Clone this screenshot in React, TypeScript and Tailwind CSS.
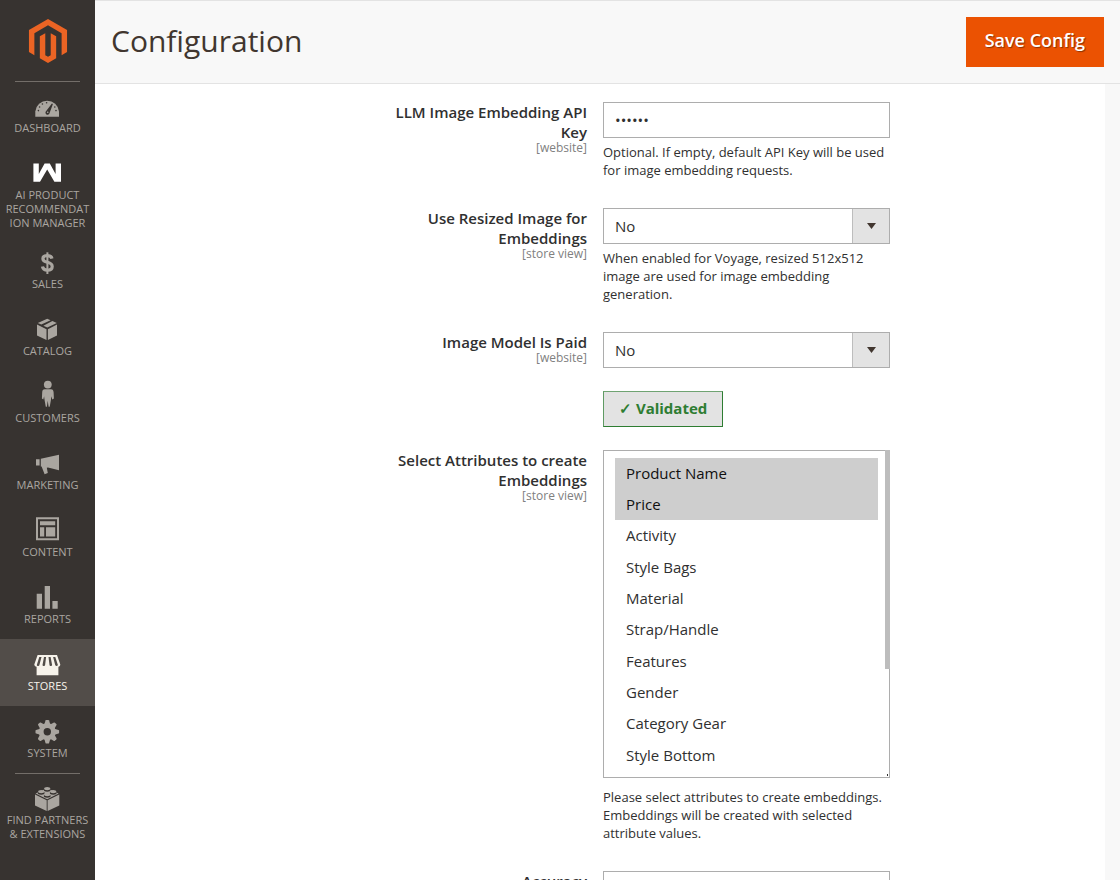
import React, {useState} from 'react';

interface MenuItem {
  label: string;
  icon: React.ReactNode;
  active?: boolean;
  divider?: boolean;
  light?: boolean;
}

const Glyph = ({children}: {children: React.ReactNode}) => (
  <svg viewBox="0 0 27 28" className="w-[27px] h-7 overflow-visible" fill="currentColor" aria-hidden="true">
    {children}
  </svg>
);

const DARK = '#373330';

const GaugeIcon = () => (
  <Glyph>
    <path d="M1.3 25.7V20.5a11.9 11.9 0 0 1 23.7 0V25.7z"/>
    <g fill={DARK}>
      <circle cx="4.4" cy="19.6" r="0.8"/>
      <circle cx="5.6" cy="16" r="0.8"/>
      <circle cx="8.4" cy="13" r="0.8"/>
      <circle cx="12.6" cy="11.8" r="0.8"/>
      <circle cx="20.8" cy="16" r="0.8"/>
      <circle cx="22" cy="19.6" r="0.8"/>
      <path d="M17.9 12.4l1 .6-3.3 9.1a2.1 2.1 0 1 1-3.4-2.1z"/>
    </g>
    <circle cx="13.7" cy="21.3" r="0.8"/>
  </Glyph>
);

const RecommendIcon = () => (
  <Glyph>
    <path d="M-.6 5.4H4.8V16L10.6 5.4h5.2L21.6 16V5.4h5.4v18.3h-6.6L13.2 11.6 6 23.7H-.6z"/>
  </Glyph>
);

const DollarIcon = () => (
  <Glyph>
    <path d="M12.4 5.3h2V27h-2z"/>
    <path d="M18 11.6c-.5-2-2.1-2.9-4.7-2.9-2.7 0-4.4 1.1-4.4 3 0 2 1.7 2.9 4.6 3.6 3.1.8 4.7 1.9 4.7 4.2 0 2.4-1.9 3.7-4.8 3.7-2.8 0-4.5-1.3-5-3.7"
          fill="none" stroke="currentColor" strokeWidth="3.2"/>
  </Glyph>
);

const BoxIcon = () => (
  <Glyph>
    <path d="M13.2 4.7l3.4 1.5-9.3 4.4-3.5-1.7zM18.4 7l4.4 1.9-9.5 4.7-3.9-1.9z"/>
    <path d="M3 10.5l9.5 4.7V26L3 21.4zM23 10.5l-9.1 4.7V26l9.1-4.6z"/>
  </Glyph>
);

const PersonIcon = () => (
  <Glyph>
    <circle cx="13.8" cy="3.6" r="3.9"/>
    <path d="M10.8 8.2h6.2c1.8 0 2.4 1.2 2.6 3l.3 6.4-1.6.9-1-3.3-.4 4.1-1.2 6.4h-1.1l-.9-5.9-.8 5.9h-1.1l-1.2-6.4-.5-4.1-.8 3.3-1.4-.9.3-6.4c.1-1.8.8-3 2.6-3z"/>
  </Glyph>
);

const MegaphoneIcon = () => (
  <Glyph>
    <path d="M2 11.3h3.6v6.2H2zM6.8 10.8L25 6.7v15.6L14 19.4l-1.2.4 1 5.3-3.2 1.2-3-7.8h-.8z"/>
  </Glyph>
);

const LayoutIcon = () => (
  <Glyph>
    <path d="M2 2.3h23v23H2zM4 4.3v19h19v-19z" fillRule="evenodd"/>
    <path d="M6 6.3h15.2v4H6zM6 12.2h4.2v9.2H6zM12 12.2h9.2v9.2H12z"/>
  </Glyph>
);

const BarsIcon = () => (
  <Glyph>
    <path d="M2.7 11.7H8v15H2.7zM10.7 4H16v22.7h-5.3zM18.4 19h5.3v7.7h-5.3z"/>
  </Glyph>
);

const ShopIcon = () => (
  <Glyph>
    <path d="M3.6 6h19.4l3.3 9.6c0 1.3-.8 2-1.9 2.2v8.5H2.6v-8.5c-1.3-.2-2.3-.9-2.3-2.2z"/>
    <g fill="#524d49">
      <path d="M5.3 8h2.2L5.4 16c-.3 1.3-2.4 1.3-2.6 0zM10 8h2.1l-1 8c-.3 1.3-2.4 1.3-2.6 0zM14.5 8h2.1l1.5 8c-.3 1.3-2.4 1.3-2.6 0zM19.1 8h2.2l2.6 8c-.3 1.3-2.3 1.3-2.7 0z"/>
    </g>
  </Glyph>
);

const teeth = [0, 45, 90, 135, 180, 225, 270, 315];

const GearIcon = () => (
  <Glyph>
    <path d="M13.3 7.2a8.5 8.5 0 1 0 0 17 8.5 8.5 0 1 0 0-17zm0 4.8a3.7 3.7 0 1 1 0 7.4 3.7 3.7 0 1 1 0-7.4z" fillRule="evenodd"/>
    {teeth.map(angle => (
      <path key={angle} d="M10.3 8.6l1.2-4.1q.2-.6.8-.6h2q.6 0 .8.6l1.2 4.1z" transform={`rotate(${angle} 13.3 15.7)`}/>
    ))}
  </Glyph>
);

const BrickIcon = () => (
  <Glyph>
    <path d="M13.2 5.2L24.6 10.6 13.2 16.2 1.6 10.6z"/>
    <path d="M1 11.6l11.7 5.6V28L1 22.4zM25.3 11.6l-11.7 5.6V28l11.7-5.6z"/>
    {[[13.2, 5.6], [7.2, 8.6], [19.2, 8.6], [13.2, 11.6]].map(([x, y]) => (
      <g key={`${x}-${y}`}>
        <ellipse cx={x} cy={y + 1.4} rx="3.4" ry="1.7" fill={DARK}/>
        <ellipse cx={x} cy={y} rx="3.1" ry="1.7"/>
      </g>
    ))}
  </Glyph>
);

const menu: MenuItem[] = [
  {label: 'Dashboard', icon: <GaugeIcon/>, divider: true},
  {label: 'AI Product Recommendation Manager', icon: <RecommendIcon/>, light: true},
  {label: 'Sales', icon: <DollarIcon/>},
  {label: 'Catalog', icon: <BoxIcon/>},
  {label: 'Customers', icon: <PersonIcon/>},
  {label: 'Marketing', icon: <MegaphoneIcon/>},
  {label: 'Content', icon: <LayoutIcon/>},
  {label: 'Reports', icon: <BarsIcon/>},
  {label: 'Stores', icon: <ShopIcon/>, active: true},
  {label: 'System', icon: <GearIcon/>},
  {label: 'Find Partners & Extensions', icon: <BrickIcon/>, divider: true},
];

const attributes = [
  'Product Name', 'Price', 'Activity', 'Style Bags', 'Material', 'Strap/Handle', 'Features', 'Gender',
  'Category Gear', 'Style Bottom',
];

const Sidebar = () => (
  <nav className="w-[95px] shrink-0 bg-[#373330] text-[#aaa6a0]">
    <a href="#home" aria-label="Magento" className="flex justify-center items-center h-[81px] text-[#eb6424]">
      <svg viewBox="0 0 24 24" className="w-11 h-11" fill="currentColor" aria-hidden="true">
        <path d="M12 24l-4.455-2.572v-12l2.97-1.715v12.001l1.485.902 1.485-.902V7.713l2.971 1.715v12L12 24zM22.391 6v12l-2.969 1.714V7.713L12 3.43 4.574 7.713v12.001L1.609 18V6L12 0l10.391 6z"/>
      </svg>
    </a>
    <ul>
      {menu.map(item => (
        <li key={item.label} className="relative">
          {item.divider && <span className="absolute top-0 left-[15px] right-[15px] h-px bg-[#736e69]"/>}
          <a
            href="#menu"
            className={`flex flex-col items-center min-h-[67px] pt-[10px] pb-[7px] px-[5px] ${item.active ? 'bg-[#524d49] text-[#f7f3eb]' : ''}`}
          >
            <span className={`flex justify-center h-7 mb-[2px] ${item.light ? 'text-white' : ''}`}>{item.icon}</span>
            <span className="w-full text-[11px] leading-[14px] text-center uppercase break-all">
              {item.label.startsWith('AI') ? <>AI Product<br/>Recommendation Manager</> :
                item.label.startsWith('Find') ? <>Find Partners<br/>&amp; Extensions</> : item.label}
            </span>
          </a>
        </li>
      ))}
    </ul>
  </nav>
);

interface FieldProps {
  id?: string;
  label?: string;
  scope?: string;
  note?: string;
  children: React.ReactNode;
}

const Field = ({id, label, scope, note, children}: FieldProps) => (
  <div className="grid grid-cols-[492fr_287fr_199fr] gap-x-4 mb-[23px]">
    <div className="justify-self-end max-w-[200px] text-right">
      {label && <label htmlFor={id} className="block text-[15px] leading-5 font-semibold">{label}</label>}
      {scope && <span className="block text-xs leading-3 text-[#808080]">[{scope}]</span>}
    </div>
    <div className="min-w-0">
      {children}
      {note && <p className="mt-[5px] mb-[6px] text-[13px] leading-[18px]">{note}</p>}
    </div>
  </div>
);

const YesNo = ({id}: {id: string}) => (
  <div className="relative">
    <select id={id} defaultValue="No" className="block w-full h-9 pl-[11px] pr-12 appearance-none bg-white border border-[#adadad] text-[15px]">
      <option>Yes</option>
      <option>No</option>
    </select>
    <span className="absolute top-px right-px bottom-px w-[37px] flex items-center justify-center bg-[#e3e3e3] border-l border-[#bdbdbd] pointer-events-none">
      <svg viewBox="0 0 9 6" className="w-[9px] h-[6px]" fill="#41362f" aria-hidden="true"><path d="M0 0h9L4.5 6z"/></svg>
    </span>
  </div>
);

const App = () => {
  const [apiKey, setApiKey] = useState('secret');
  const [selected, setSelected] = useState(['Product Name', 'Price']);

  const updateSelected = (e: React.ChangeEvent<HTMLSelectElement>) => {
    setSelected(Array.from(e.target.selectedOptions, option => option.value));
  };

  return (
    <div className="flex h-screen overflow-hidden bg-white text-[#303030] font-['Open_Sans','Noto_Sans',sans-serif]">
      <Sidebar/>
      <div className="flex flex-col flex-1 min-w-0">
        <header className="flex shrink-0 items-center justify-between h-[84px] px-4 bg-[#f8f8f8] border-t border-b border-[#e3e3e3]">
          <h1 className="pb-[2px] text-[30px] leading-10 text-[#41362f]">Configuration</h1>
          <button className="h-[50px] px-[19px] pb-1 bg-[#eb5202] text-white text-lg font-semibold [text-shadow:1px_1px_1px_rgba(0,0,0,0.4)]">
            Save Config
          </button>
        </header>
        <main className="flex-1 min-h-0 pr-[15px] bg-[#f8f8f8] overflow-hidden">
          <form className="min-h-full pt-[18px] bg-white" onSubmit={e => e.preventDefault()}>
            <Field id="api-key" label="LLM Image Embedding API Key" scope="website"
                   note="Optional. If empty, default API Key will be used for image embedding requests.">
              <input id="api-key" type="password" value={apiKey} onChange={e => setApiKey(e.target.value)}
                     className="block w-full h-9 px-[11px] border border-[#adadad] text-[15px]"/>
            </Field>
            <Field id="resized" label="Use Resized Image for Embeddings" scope="store view"
                   note="When enabled for Voyage, resized 512x512 image are used for image embedding generation.">
              <YesNo id="resized"/>
            </Field>
            <Field id="paid" label="Image Model Is Paid" scope="website">
              <YesNo id="paid"/>
            </Field>
            <Field>
              <button type="button" className="block h-9 px-[15px] pb-[2px] bg-[#e3e3e3] border border-[#2e7d32] border-t-[#6fa372] border-l-[#5f9a63] text-[15px] font-bold text-[#2e7d32]">
                ✓ Validated
              </button>
            </Field>
            <Field id="attributes" label="Select Attributes to create Embeddings" scope="store view"
                   note="Please select attributes to create embeddings. Embeddings will be created with selected attribute values.">
              <div className="relative mb-[10px]">
                <select id="attributes" multiple size={10} value={selected} onChange={updateSelected}
                        className="block w-full h-[328px] px-[11px] py-[7px] bg-white border border-[#adadad] text-[15px] overflow-y-auto">
                  {attributes.map(name => (
                    <option key={name} className="px-[11px] pt-[5px] pb-[6px] nth-[3n]:pb-[7px]">{name}</option>
                  ))}
                </select>
                <span className="absolute top-0 right-0 w-[5px] h-2/3 bg-[#bdbdbd] pointer-events-none"/>
                <span className="absolute bottom-[2px] right-[2px] w-px h-[2px] bg-[#303030] pointer-events-none"/>
              </div>
            </Field>
            <Field id="accuracy" label="Accuracy">
              <input id="accuracy" type="text" className="block w-full h-9 px-[11px] border border-[#adadad] text-[15px]"/>
            </Field>
          </form>
        </main>
      </div>
    </div>
  );
};

export default App;
